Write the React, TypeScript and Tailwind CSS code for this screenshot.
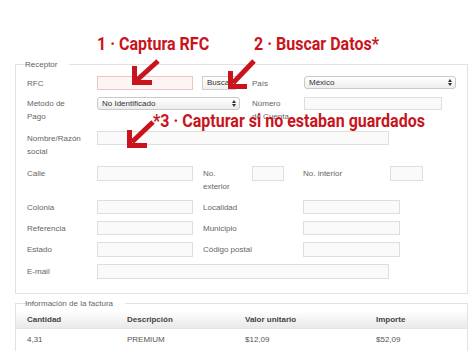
import React from 'react';

const RED = '#c8141c';

const Field: React.FC<{ w: string; h?: string; pink?: boolean }> = ({ w, h = 'h-[14px]', pink }) => (
  <div
    className={`${w} ${h} shrink-0 border ${pink ? 'border-[#f0c4c4] bg-[#fdf4f4]' : 'border-[#dedede] bg-[#fafafa]'}`}
  />
);

const UpDown = () => (
  <svg width="4" height="7" viewBox="0 0 4 7" className="shrink-0">
    <polygon points="0,3 2,0 4,3" fill="#333" />
    <polygon points="0,4 2,7 4,4" fill="#333" />
  </svg>
);

const Select: React.FC<{ w: string; value: string }> = ({ w, value }) => (
  <div className={`${w} h-[13px] shrink-0 rounded-[3px] border border-[#c9c9c9] bg-gradient-to-b from-white to-[#ededed] flex items-center justify-between pl-[4px] pr-[3px] text-[#333]`}>
    <span className="leading-none">{value}</span>
    <UpDown />
  </div>
);

const Label: React.FC<{ w: string; children: React.ReactNode; className?: string }> = ({ w, children, className = '' }) => (
  <div className={`${w} shrink-0 leading-[13px] ${className}`}>{children}</div>
);

const Headline: React.FC<{ children: React.ReactNode }> = ({ children }) => (
  <span
    className="inline-block origin-left scale-x-[0.89] whitespace-nowrap font-['Roboto',sans-serif] text-[18px] font-bold leading-[18px] text-[#c8141c]"
  >
    {children}
  </span>
);

export default function App() {
  return (
    <div className="relative w-[474px] h-[351px] overflow-hidden bg-white font-['Liberation_Sans',Arial,sans-serif] text-[8px] text-[#666]">
      {/* annotations above the form */}
      <div className="h-[59px] flex pl-[97px] pt-[35px]">
        <div className="w-[157px]">
          <Headline>1 · Captura RFC</Headline>
        </div>
        <Headline>2 · Buscar Datos*</Headline>
      </div>

      <fieldset className="ml-[15px] w-[453px] border border-[#e2e2e2] pl-[11px] pt-[6px] pb-[14px]">
        <legend className="ml-[8px] px-[1px] leading-[11px] -translate-x-[11px]">Receptor</legend>

        <div className="flex items-start mb-[7px]">
          <Label w="w-[70px]" className="pt-[1px]">RFC</Label>
          <Field w="w-[96px]" pink />
          <div className="ml-[9px] w-[34px] h-[14px] shrink-0 overflow-hidden border border-[#cfcfcf] bg-gradient-to-b from-white to-[#f0f0f0] pl-[4px] leading-[12px] text-[#333]">Buscar</div>
          <Label w="w-[52px]" className="ml-[16px] pt-[1px]">País</Label>
          <Select w="w-[152px]" value="México" />
        </div>

        <div className="flex items-start mb-[8px]">
          <Label w="w-[70px]">Metodo de<br />Pago</Label>
          <Select w="w-[143px]" value="No Identificado" />
          <Label w="w-[52px]" className="ml-[12px]">Número<br />de Cuenta</Label>
          <Field w="w-[138px]" h="h-[13px]" />
        </div>

        <div className="flex items-start mb-[8px]">
          <Label w="w-[70px]" className="pt-[1px]">Nombre/Razón<br />social</Label>
          <Field w="w-[292px]" />
        </div>

        <div className="flex items-start mb-[7px]">
          <Label w="w-[70px]" className="pt-[1px]">Calle</Label>
          <Field w="w-[96px]" h="h-[15px]" />
          <Label w="w-[49px]" className="ml-[10px] pt-[1px]">No.<br />exterior</Label>
          <Field w="w-[32px]" h="h-[15px]" />
          <Label w="w-[87px]" className="ml-[19px] pt-[1px]">No. interior</Label>
          <Field w="w-[33px]" h="h-[15px]" />
        </div>

        {[
          ['Colonia', 'Localidad', 'h-[14px]'],
          ['Referencia', 'Municipio', 'h-[14px]'],
          ['Estado', 'Código postal', 'h-[15px]'],
        ].map(([a, b, h]) => (
          <div key={a} className="flex items-start mb-[7px]">
            <Label w="w-[70px]" className="pt-[1px]">{a}</Label>
            <Field w="w-[96px]" h={h} />
            <Label w="w-[100px]" className="ml-[10px] pt-[1px]">{b}</Label>
            <Field w="w-[97px]" h={h} />
          </div>
        ))}

        <div className="flex items-start">
          <Label w="w-[70px]" className="pt-[1px]">E-mail</Label>
          <Field w="w-[292px]" h="h-[15px]" />
        </div>
      </fieldset>

      <fieldset className="ml-[15px] mt-[4px] w-[453px] border border-[#e2e2e2] pl-[11px] pt-[2px] h-[80px]">
        <legend className="ml-[8px] px-[1px] leading-[11px] -translate-x-[11px]">Información de la factura</legend>
        <div className="-ml-[11px] w-[451px]">
          <div className="flex h-[18px] items-center border-b border-[#e4e4e4] bg-gradient-to-b from-white to-[#e9e9e9] pl-[11px] font-bold text-[#444]">
            <div className="w-[100px]">Cantidad</div>
            <div className="w-[118px]">Descripción</div>
            <div className="w-[131px]">Valor unitario</div>
            <div>Importe</div>
          </div>
          <div className="flex h-[22px] items-center pl-[11px] text-[#555]">
            <div className="w-[100px]">4,31</div>
            <div className="w-[118px]">PREMIUM</div>
            <div className="w-[131px]">$12,09</div>
            <div>$52,09</div>
          </div>
        </div>
      </fieldset>

      {/* third annotation, laid over the form */}
      <div className="absolute left-[153px] top-[112px]">
        <Headline>*3 · Capturar si no estaban guardados</Headline>
      </div>

      {/* arrows */}
      <svg className="pointer-events-none absolute inset-0" width="474" height="351" viewBox="0 0 474 351">
        <g stroke={RED} strokeWidth="5" fill="none" strokeLinejoin="miter">
          <line x1="158" y1="61" x2="137" y2="80" />
          <polyline points="134.5,66 134.5,82.5 152,82.5" />
          <line x1="254" y1="61" x2="233" y2="83" />
          <polyline points="230.5,71 230.5,86.5 247,86.5" />
          <line x1="153" y1="122" x2="132" y2="142" />
          <polyline points="129.5,130 129.5,145.5 147,145.5" />
        </g>
      </svg>
    </div>
  );
}
